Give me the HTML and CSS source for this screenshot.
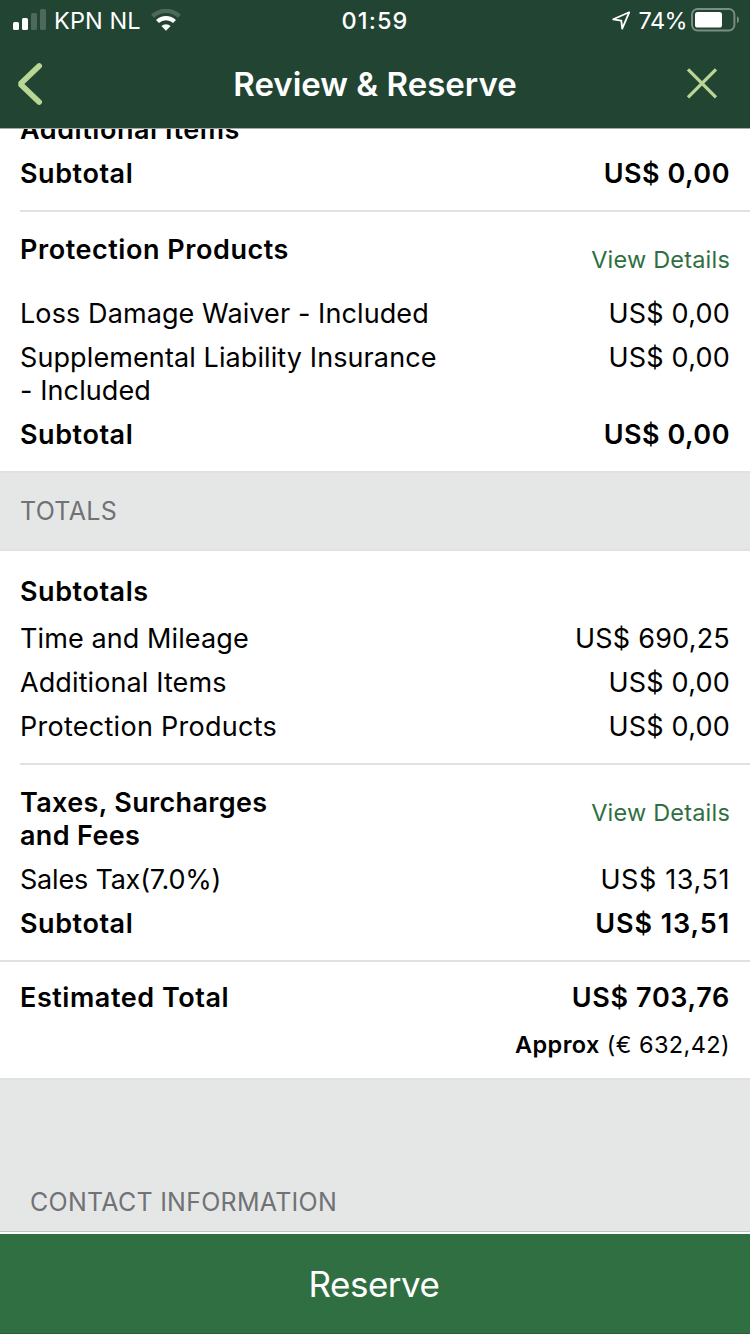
FILE: index.html
```html
<!DOCTYPE html>
<html lang="en">
<head>
    <meta charset="UTF-8">
    <meta name="viewport" content="width=device-width, initial-scale=1.0">
    <title>Review &amp; Reserve</title>
    <link rel="stylesheet" href="styles.css">
</head>
<body>

    <header class="top-bar">
        <div class="status-bar">
            <div class="status-left">
                <svg class="signal" width="34" height="22" viewBox="0 0 34 22" fill="#fff">
                    <rect x="0" y="13" width="6" height="8" rx="1.5"/>
                    <rect x="9" y="9" width="6" height="12" rx="1.5"/>
                    <rect x="18" y="4" width="6" height="17" rx="1.5" opacity="0.2"/>
                    <rect x="27" y="0" width="6" height="21" rx="1.5" opacity="0.2"/>
                </svg>
                <span class="carrier">KPN NL</span>
                <svg class="wifi" width="30" height="22" viewBox="0 0 30 22" fill="none" stroke="#fff">
                    <path d="M1.6 7.3A19.2 19.2 0 0 1 28.4 7.3" stroke-width="4.2" opacity="0.2"/>
                    <path d="M6.5 12.6A12.2 12.2 0 0 1 23.5 12.6" stroke-width="4.2"/>
                    <path d="M10.4 17A6.8 6.8 0 0 1 19.6 17L15 21.8Z" fill="#fff" stroke="none"/>
                </svg>
            </div>
            <span class="time">01:59</span>
            <div class="status-right">
                <svg class="location" width="19" height="19" viewBox="0 0 19 19" fill="none" stroke="#fff" stroke-width="1.8" stroke-linejoin="round">
                    <path d="M17.2 1.3L1.2 8.3L9.3 9.6L10.2 17.6Z"/>
                </svg>
                <span class="percent">74%</span>
                <svg class="battery" width="49" height="24" viewBox="0 0 49 24">
                    <rect x="1" y="1" width="42.4" height="21.5" rx="5.5" fill="none" stroke="#fff" stroke-width="1.9" opacity="0.4"/>
                    <rect x="4" y="4" width="27" height="15.5" rx="2.6" fill="#fff"/>
                    <path d="M46 8.2C48.6 9.4 48.6 14.1 46 15.3Z" fill="#fff" opacity="0.4"/>
                </svg>
            </div>
        </div>
        <div class="nav-bar">
            <svg class="back" width="28" height="44" viewBox="0 0 28 44" fill="none" stroke="#b9d695" stroke-width="5.8" stroke-linecap="round" stroke-linejoin="bevel">
                <path d="M23.1 4L4.3 22L23.1 40"/>
            </svg>
            <h1>Review &amp; Reserve</h1>
            <svg class="close" width="32" height="32" viewBox="0 0 32 32" stroke="#b9d695" stroke-width="3.3">
                <path d="M2 1.4L30 29.4M30 1.4L2 29.4"/>
            </svg>
        </div>
    </header>

    <main class="content">
        <section class="block block-first">
            <div class="row bold"><span>Additional Items</span></div>
            <div class="row bold"><span>Subtotal</span><span class="price">US$ 0,00</span></div>
        </section>

        <section class="block protection">
            <div class="row bold heading"><span>Protection Products</span><a class="details">View Details</a></div>
            <div class="row"><span>Loss Damage Waiver - Included</span><span class="price">US$ 0,00</span></div>
            <div class="row"><span>Supplemental Liability Insurance<br>- Included</span><span class="price">US$ 0,00</span></div>
            <div class="row bold"><span>Subtotal</span><span class="price">US$ 0,00</span></div>
        </section>

        <h2 class="section-title">TOTALS</h2>

        <section class="block totals">
            <div class="row bold totals-heading"><span>Subtotals</span></div>
            <div class="row"><span>Time and Mileage</span><span class="price">US$ 690,25</span></div>
            <div class="row"><span>Additional Items</span><span class="price">US$ 0,00</span></div>
            <div class="row"><span class="products">Protection Products</span><span class="price">US$ 0,00</span></div>
        </section>

        <section class="block taxes">
            <div class="row bold"><span class="taxes-title">Taxes, Surcharges<br>and Fees</span><a class="details">View Details</a></div>
            <div class="row"><span class="tax-rate">Sales Tax(7.0%)</span><span class="price tax-price">US$ 13,51</span></div>
            <div class="row bold"><span>Subtotal</span><span class="price tax-price">US$ 13,51</span></div>
        </section>

        <section class="block estimate">
            <div class="row bold"><span>Estimated Total</span><span class="price total-price">US$ 703,76</span></div>
            <p class="approx"><b>Approx</b> (€ 632,42)</p>
        </section>

        <h2 class="contact-title">CONTACT INFORMATION</h2>
    </main>

    <button class="reserve" type="button">Reserve</button>

</body>
</html>
```
FILE: styles.css
```css
:root {
    --header-color: #224432;
    --primary-color: #2f6f42;
    --grey-background: #e5e7e6;
    --divider-color: #e1e1e1;
    --label-color: #717276;
}

* {
    box-sizing: border-box;
}

body {
    display: flex;
    flex-direction: column;
    height: 1334px;
    margin: 0;
    overflow: hidden;
    background: #fff;
    color: #000;
    font-family: Inter, "Liberation Sans", sans-serif;
    font-size: 27px;
    line-height: 33px;
}

h1, h2, p {
    margin: 0;
}

svg {
    display: block;
    flex: none;
}

/* Header */
.top-bar {
    flex: none;
    height: 129px;
    background: var(--header-color);
    border-bottom: 1px solid #a5aaa6;
    color: #fff;
}

.status-bar {
    display: grid;
    grid-template-columns: 1fr auto 1fr;
    height: 40px;
    padding: 0 11px 0 13px;
    font-size: 23.5px;
    line-height: 42px;
}

.status-left,
.status-right {
    display: flex;
    align-items: flex-start;
}

.status-right {
    justify-content: flex-end;
}

.signal {
    margin-top: 9px;
}

.carrier {
    margin-left: 7px;
    letter-spacing: 0.1px;
}

.wifi {
    margin: 9px 0 0 10px;
}

.time {
    margin-left: -2px;
    font-weight: 500;
    letter-spacing: 1.1px;
}

.location {
    margin: 11px 8px 0 0;
}

.percent {
    letter-spacing: -0.6px;
}

.battery {
    margin: 8px -1px 0 4px;
}

.nav-bar {
    display: grid;
    grid-template-columns: 1fr auto 1fr;
    align-items: center;
    height: 88px;
    padding: 0 16px;
}

.nav-bar h1 {
    font-size: 33px;
    font-weight: 600;
    line-height: 40px;
}

.close {
    justify-self: end;
    margin-right: 16px;
}

/* Scrolled price list */
.content {
    flex: 1;
    overflow: hidden;
}

.block {
    padding: 21px 20px 20px;
}

.block-first {
    margin-top: -16px;
    padding-top: 0;
}

.row {
    display: flex;
    justify-content: space-between;
    letter-spacing: 0.1px;
    white-space: nowrap;
}

.row + .row {
    margin-top: 11px;
}

.bold {
    font-weight: 600;
    letter-spacing: 0.55px;
}

.price {
    letter-spacing: 0.22px;
}

.bold .price {
    letter-spacing: 0.5px;
}

.bold .total-price {
    letter-spacing: 0.65px;
}

.tax-price {
    letter-spacing: 0.6px;
}

.bold .tax-price {
    letter-spacing: 0.9px;
}

.products {
    letter-spacing: 0.27px;
}

.taxes-title {
    letter-spacing: 0.35px;
}

.tax-rate {
    letter-spacing: -0.2px;
}

.protection,
.taxes {
    position: relative;
    padding-top: 23px;
}

/* Inset divider between groups */
.protection::before,
.taxes::before {
    content: "";
    position: absolute;
    top: 0;
    left: 20px;
    right: 0;
    height: 2px;
    background: var(--divider-color);
}

.heading {
    height: 53px;
}

.details {
    padding-top: 10px;
    color: var(--primary-color);
    font-size: 23.5px;
    font-weight: 400;
    letter-spacing: 0.2px;
}

.section-title {
    height: 80px;
    padding: 0 20px;
    background: var(--grey-background);
    border-top: 2px solid var(--divider-color);
    border-bottom: 2px solid var(--divider-color);
    color: var(--label-color);
    font-size: 25px;
    font-weight: 400;
    letter-spacing: 0.3px;
    line-height: 77px;
}

.totals {
    padding-top: 24px;
}

.totals .totals-heading + .row {
    margin-top: 14px;
}

.estimate {
    height: 118px;
    border-top: 2px solid var(--divider-color);
    padding-top: 19px;
}

.approx {
    margin-top: 14px;
    font-size: 23.5px;
    letter-spacing: 0.4px;
    text-align: right;
}

.approx b {
    font-weight: 600;
}

.contact-title {
    height: 154px;
    padding: 106px 30px 0;
    background: var(--grey-background);
    border-top: 2px solid var(--divider-color);
    border-bottom: 1px solid #c0c2c4;
    color: var(--label-color);
    font-size: 25px;
    font-weight: 400;
    letter-spacing: 0.26px;
}

/* Bottom button */
.reserve {
    flex: none;
    height: 100px;
    padding: 0 2px 0 0;
    background: var(--primary-color);
    border: none;
    border-bottom: 1px solid #285f38;
    color: #fff;
    font-family: inherit;
    font-size: 35px;
    letter-spacing: -0.5px;
}
```
